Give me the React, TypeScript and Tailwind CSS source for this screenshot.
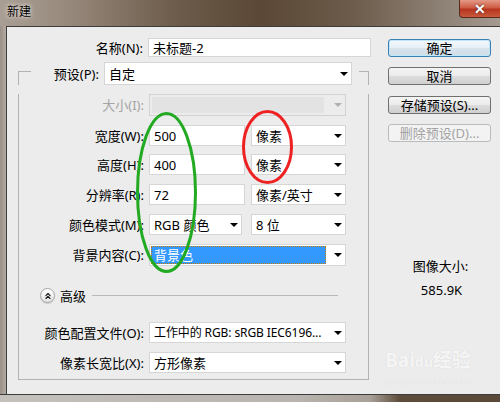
import { ChevronsUp } from 'lucide-react';

const ui = "font-['Noto_Sans','Noto_Sans_CJK_SC',sans-serif]";

function Arrow({ disabled }: { disabled?: boolean }) {
  return (
    <svg width="8" height="4" viewBox="0 0 8 4">
      <path d="M0 0h8L4 4z" fill={disabled ? '#b0b0b0' : '#000'} />
    </svg>
  );
}

function Field({ value, className }: { value: string; className: string }) {
  return (
    <div className={`flex items-center bg-white border border-[#d6d6d6] pl-[4px] text-[13px] leading-[16px] text-black ${className}`}>
      {value}
    </div>
  );
}

function Select({ value, className, disabled, focused, tight }: { value?: string; className: string; disabled?: boolean; focused?: boolean; tight?: boolean }) {
  return (
    <div className={`flex items-center border ${disabled ? 'bg-[#ececec] border-[#d2d2d2]' : 'bg-white border-[#d6d6d6]'} ${className}`}>
      {focused ? (
        <div className="flex-1 self-stretch m-[1px] mr-[4px] flex items-center bg-[#3399ff] outline-1 outline-dotted outline-[#c87a00] -outline-offset-1 pl-[3px] text-[13px] leading-[16px] text-white">
          {value}
        </div>
      ) : disabled ? (
        <div className="flex-1 self-stretch m-[2px] mr-[6px] bg-[#e3e3e3]" />
      ) : (
        <div className={`flex-1 min-w-0 pl-[4px] leading-[16px] text-black whitespace-nowrap ${tight ? 'text-[12px] tracking-[-0.1px]' : 'text-[13px]'}`}>{value}</div>
      )}
      <div className="w-[15px] shrink-0 pr-[3px] flex justify-end">
        <Arrow disabled={disabled} />
      </div>
    </div>
  );
}

function Label({ text, className, disabled }: { text: string; className: string; disabled?: boolean }) {
  return (
    <div className={`shrink-0 text-right pr-[5px] text-[13px] leading-[16px] whitespace-nowrap ${disabled ? 'text-[#a3a3a3]' : 'text-black'} ${className}`}>{text}</div>
  );
}

function Button({ text, primary, disabled }: { text: string; primary?: boolean; disabled?: boolean }) {
  const look = disabled
    ? 'border-[#b8bcbf] bg-[#f3f3f3] text-[#a3a3a3]'
    : primary
      ? 'border-[#3c7fb1] bg-[linear-gradient(#f3f9fd,#e6f0f6_50%,#d8e4ec_50%,#cfdde6)] text-black shadow-[inset_0_0_0_1px_#bfe6fb]'
      : 'border-[#707070] bg-[linear-gradient(#f4f4f4,#ebebeb_50%,#dddddd_50%,#cfcfcf)] text-black';
  return (
    <div className={`h-[18px] w-[103px] flex items-center justify-center rounded-[3px] border text-[13px] leading-[16px] ${look}`}>
      {text}
    </div>
  );
}

export default function App() {
  return (
    <div className={`relative w-[500px] h-[402px] overflow-hidden bg-[#8b7e72] ${ui}`}>
      {/* title bar */}
      <div className="h-[26px] flex bg-[linear-gradient(90deg,#a99e94_0%,#9a8c7f_12%,#6d5c4b_35%,#5b4837_52%,#6c5b4a_70%,#8d8074_88%,#a59a90_100%)]">
        <span className="pl-[7px] pt-[4px] text-[12px] leading-[16px] text-black [text-shadow:0_0_6px_#e8e2dc,0_0_3px_#e8e2dc]">新建</span>
        <div className="ml-auto w-[41px] h-[18px] flex items-center justify-center rounded-bl-[4px] border border-t-0 border-r-0 border-[#5a2a20] bg-[linear-gradient(#e39a88,#cf5c44_45%,#b73420_55%,#c85a3a)]">
          <span className="text-[14px] font-bold leading-[16px] text-white [text-shadow:0_0_2px_#3a1a10]">✕</span>
        </div>
      </div>

      <div className="flex h-[368px]">
        <div className="w-[6px] bg-[linear-gradient(90deg,#9a9088,#b3aaa2)]" />
        <div className="flex-1 flex border-l border-t border-[#3d3d3d] bg-[#ececec]">
          {/* left side */}
          <div className="w-[381px]">
            <div className="mt-[11px] flex">
              <Label text="名称(N):" className="w-[141px] self-center" />
              <Field value="未标题-2" className="w-[223px] h-[19px]" />
            </div>

            <div className="ml-[11px] mt-[5px] w-[351px]">
              <div className="flex h-[23px]">
                <div className="w-[13px] mt-[9px] border-t border-l border-[#b2b2b2]" />
                <Label text="预设(P):" className="w-[73px] self-center" />
                <Select value="自定" className="w-[248px] h-[23px]" />
                <div className="ml-[7px] flex-1 mt-[9px] border-t border-r border-[#b2b2b2]" />
              </div>

              <div className="border-l border-r border-b border-[#b2b2b2] pb-[6px]">
                <div className="mt-[9px] flex items-center">
                  <Label text="大小(I):" disabled className="w-[130px]" />
                  <Select disabled className="w-[197px] h-[22px]" />
                </div>
                <div className="mt-[9px] flex items-center">
                  <Label text="宽度(W):" className="w-[130px]" />
                  <Field value="500" className="w-[96px] h-[21px]" />
                  <Select value="像素" className="ml-[6px] w-[95px] h-[21px]" />
                </div>
                <div className="mt-[8px] flex items-center">
                  <Label text="高度(H):" className="w-[130px]" />
                  <Field value="400" className="w-[96px] h-[21px]" />
                  <Select value="像素" className="ml-[6px] w-[95px] h-[21px]" />
                </div>
                <div className="mt-[9px] flex items-center">
                  <Label text="分辨率(R):" className="w-[130px]" />
                  <Field value="72" className="w-[96px] h-[21px]" />
                  <Select value="像素/英寸" className="ml-[6px] w-[95px] h-[21px]" />
                </div>
                <div className="mt-[9px] flex items-center">
                  <Label text="颜色模式(M):" className="w-[130px]" />
                  <Select value="RGB 颜色" className="w-[93px] h-[21px]" />
                  <Select value="8 位" className="ml-[9px] w-[95px] h-[21px]" />
                </div>
                <div className="mt-[9px] flex items-center">
                  <Label text="背景内容(C):" className="w-[130px]" />
                  <Select value="背景色" focused className="w-[197px] h-[22px]" />
                </div>

                <div className="mt-[22px] ml-[21px] flex items-center h-[15px]">
                  <div className="w-[15px] h-[15px] rounded-full border border-[#a6a6a6] bg-[linear-gradient(#ffffff,#e2e2e2)] shadow-[0_1px_1px_#c8c8c8] flex items-center justify-center">
                    <ChevronsUp size={10} strokeWidth={2.6} color="#111" />
                  </div>
                  <span className="ml-[5px] text-[13px] leading-[16px] text-black">高级</span>
                  <div className="ml-[6px] w-[246px] h-px bg-[#b8b8b8]" />
                </div>

                <div className="mt-[19px] flex items-center">
                  <Label text="颜色配置文件(O):" className="w-[130px]" />
                  <Select value="工作中的 RGB: sRGB IEC6196..." tight className="w-[197px] h-[21px]" />
                </div>
                <div className="mt-[9px] flex items-center">
                  <Label text="像素长宽比(X):" className="w-[130px]" />
                  <Select value="方形像素" className="w-[197px] h-[21px]" />
                </div>
              </div>
            </div>
          </div>

          {/* right side */}
          <div className="w-[103px] flex flex-col">
            <div className="mt-[12px]"><Button text="确定" primary /></div>
            <div className="mt-[10px]"><Button text="取消" /></div>
            <div className="mt-[11px]"><Button text="存储预设(S)..." /></div>
            <div className="mt-[10px]"><Button text="删除预设(D)..." disabled /></div>
            <div className="mt-[116px] pl-[2px] text-center text-[13px] leading-[16px] text-black">图像大小:</div>
            <div className="mt-[8px] pl-[4px] text-center text-[13px] leading-[16px] text-black">585.9K</div>
          </div>
        </div>
      </div>

      {/* bottom frame */}
      <div className="h-[8px] border-t border-[#3d3d3d] bg-[linear-gradient(90deg,#c4c0bc_0%,#b8b3ae_60%,#a8a098_74%,#5e4c3b_80%,#5a4838_100%)]" />

      {/* watermark */}
      <div className="absolute left-[384px] top-[349px] w-[88px] pointer-events-none text-center">
        <div className="text-[19px] font-bold leading-[22px] text-[#f5f5f5] [text-shadow:0_0_1px_#d2d2d2] whitespace-nowrap">Bai<span className="text-[14px]">du</span>经验</div>
        <div className="mt-[2px] text-[10px] leading-[12px] text-[#f2f2f2] [text-shadow:0_0_1px_#d6d6d6] whitespace-nowrap">jingyan.baidu.com</div>
      </div>

      {/* annotations */}
      <svg className="absolute inset-0 pointer-events-none" width="500" height="402" viewBox="0 0 500 402">
        <ellipse cx="166.5" cy="192.5" rx="29" ry="79" fill="none" stroke="#22aa22" strokeWidth="3" />
        <ellipse cx="267.5" cy="147" rx="24" ry="35.5" fill="none" stroke="#ee2222" strokeWidth="3" />
      </svg>
    </div>
  );
}
